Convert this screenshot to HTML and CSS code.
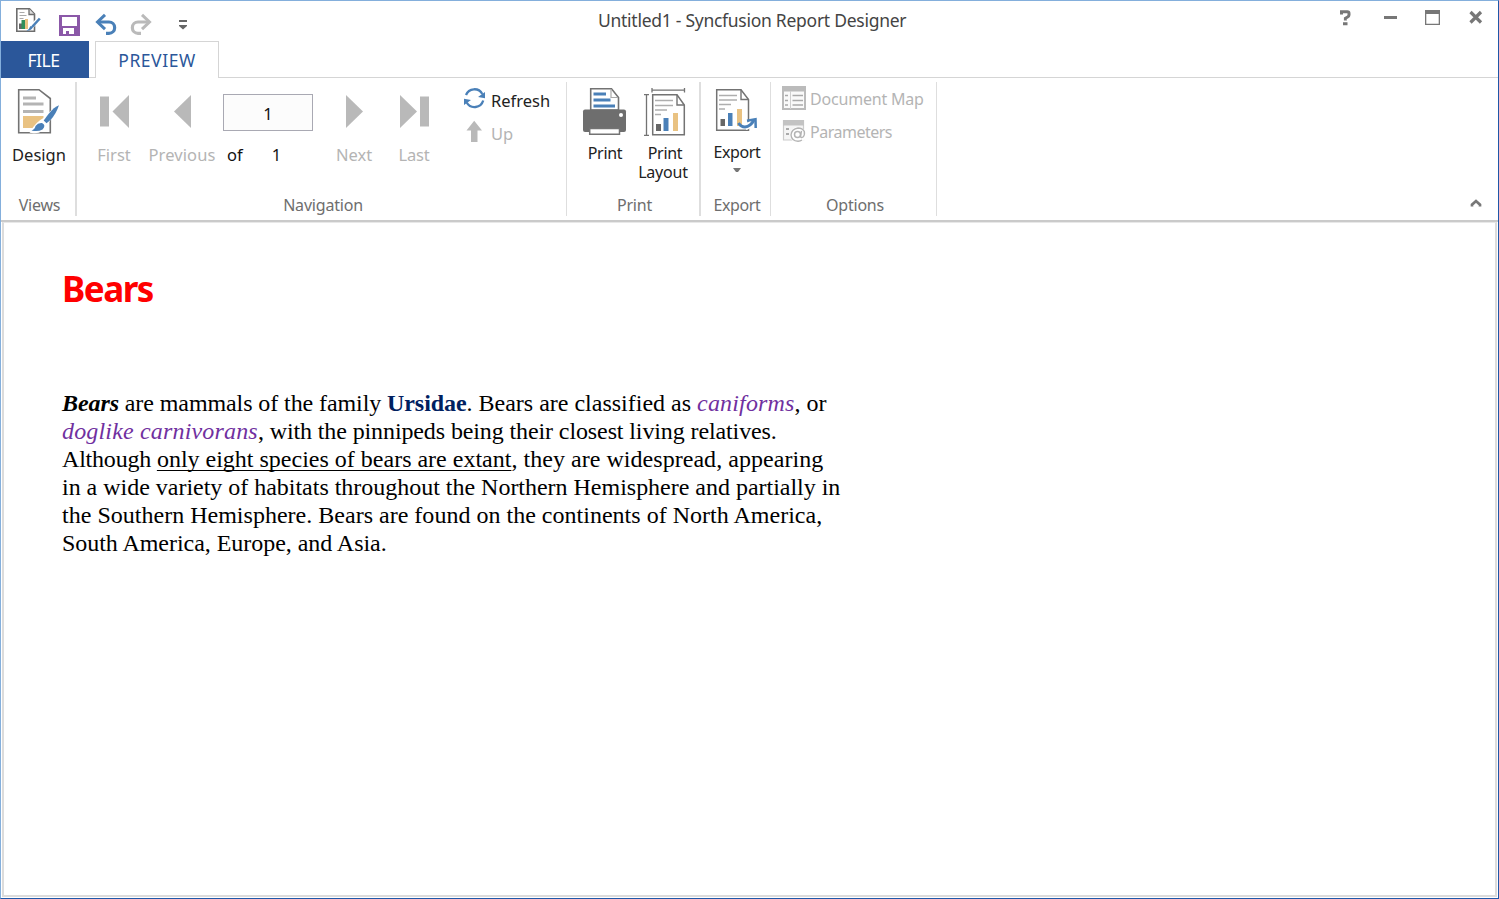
FILE: index.html
```html
<!DOCTYPE html>
<html lang="en">
<head>
<meta charset="utf-8">
<title>Untitled1 - Syncfusion Report Designer</title>
<link rel="stylesheet" href="styles.css">
</head>
<body>
<div class="window">
  <header class="titlebar">
    <div class="quick">
      <svg class="q-app" viewBox="14 6 28 28" width="28" height="28">
        <path d="M16.800 8.800H29.500L34.500 14V31.200H16.800Z" fill="#fff" stroke="#6d6d6d" stroke-width="1.600"/>
        <path d="M29 8.800V14.500H34.500" fill="#ddd" stroke="#6d6d6d" stroke-width="1.300"/>
        <path d="M19.500 12.500h5M19.500 15.500h7M19.500 18.500h4" stroke="#aaa" stroke-width="1.200"/>
        <path d="M19 23.500h3v5.500h-3z" fill="#666"/><path d="M21.500 20h3.500v9h-3.500z" fill="#2f8f5b"/><path d="M25 19h3v10h-3z" fill="#e9c282"/>
        <path d="M37 21L32 26" stroke="#fff" stroke-width="4"/>
        <path d="M39.800 18.500L32.500 26.500" stroke="#4a80b8" stroke-width="2.500"/><path d="M33.500 26q-1.500 5-7 4.800q3-1.500 3.700-4.500z" fill="#4a80b8"/>
      </svg>
      <svg class="q-save" viewBox="59 15 21 21" width="21" height="21">
        <path fill="#8b58a8" fill-rule="evenodd" d="M59 15H80V36H59ZM62 17V26H77V17ZM63 28V34H66V31H69V34H74V28Z"/>
      </svg>
      <svg class="q-undo" viewBox="94 13 24 24" width="24" height="24">
        <path d="M98 22H109A5.500 5.500 0 0 1 109 33.300H106" fill="none" stroke="#4a80b8" stroke-width="3.200"/>
        <path d="M105 14.800L97.500 22L105 29.200" fill="none" stroke="#4a80b8" stroke-width="3"/>
      </svg>
      <svg class="q-redo" viewBox="129 13 24 24" width="24" height="24">
        <path d="M149 22H138A5.500 5.500 0 0 0 138 33.300H141" fill="none" stroke="#bababa" stroke-width="3.200"/>
        <path d="M142 14.800L149.500 22L142 29.200" fill="none" stroke="#bababa" stroke-width="3"/>
      </svg>
      <svg class="q-more" viewBox="178 18 10 12" width="10" height="12">
        <path d="M179 20h8v2h-8zM179 25h8v1l-4 3.500l-4-3.500z" fill="#666"/>
      </svg>
    </div>
    <div class="caption">Untitled1 - Syncfusion Report Designer</div>
    <svg class="controls" viewBox="1336 6 150 24" width="150" height="24">
      <path d="M1341.500 14.500V11.700H1347.300Q1349 11.700 1349 13.500V15Q1349 16.500 1347.500 17L1345.400 18.300V20.500M1343 23.700H1347.500" fill="none" stroke="#777" stroke-width="3"/>
      <path d="M1384 16h13v3h-13z" fill="#777"/>
      <path fill="#777" fill-rule="evenodd" d="M1425 10h15v15h-15zM1426.300 14v9.700h12.400V14z"/>
      <path d="M1470.500 12L1481 22.500M1481 12L1470.500 22.500" stroke="#777" stroke-width="3.200"/>
    </svg>
  </header>

  <nav class="tabs">
    <div class="tab-file"><span class="t-file">FILE</span></div>
    <div class="tab-gap"></div>
    <div class="tab-preview"><span class="t-preview">PREVIEW</span></div>
    <div class="tab-rest"></div>
  </nav>

  <section class="ribbon">
    <div class="group views">
      <div class="body">
        <div class="btn">
          <svg viewBox="14 84 50 58" width="50" height="58">
            <path d="M18.700 89.700H39L50.300 98.500V132.800H18.700Z" fill="#fff" stroke="#737373" stroke-width="1.600"/>
            <path d="M23 98h13M23 104h20.500M23 111.500h20.500" stroke="#b4b4b4" stroke-width="2.800"/>
            <path d="M23 116h20.500v12H23z" fill="#e9c282"/>
            <path d="M58 105.500L44.500 119Q37 123 32 131.500Q42 133 44.500 124.500L48 121Z" fill="#fff" stroke="#fff" stroke-width="3"/>
            <path d="M59 105.200Q54 107 48.500 114L43.700 120.500L46.500 123.200L50.500 120Q56 114 59 105.200Z" fill="#4a80b8"/>
            <path d="M42 123Q46.500 125 42.500 129.500Q38 132 31.500 130.500Q35 129 35.500 126Q38 122.500 42 123Z" fill="#4a80b8"/>
          </svg>
          <span class="dark t-design">Design</span>
        </div>
      </div>
      <div class="label l-views">Views</div>
    </div>

    <div class="group navigation">
      <div class="body">
        <div class="btn b-first">
          <svg viewBox="90 84 48 58" width="48" height="58"><path d="M100 96.500h9v30h-9zM129 95v33L112.500 111.500z" fill="#b9b9b9"/></svg>
          <span class="t-first">First</span>
        </div>
        <div class="btn b-prev">
          <svg viewBox="158 84 48 58" width="48" height="58"><path d="M191 95v33L174 111.500z" fill="#b9b9b9"/></svg>
          <span class="t-prev">Previous</span>
        </div>
        <div class="pager">
          <div class="page-box">1</div>
          <div class="page-count"><span class="t-of">of</span><span>1</span></div>
        </div>
        <div class="btn b-next">
          <svg viewBox="330 84 48 58" width="48" height="58"><path d="M346 95v33L363 111.500z" fill="#b9b9b9"/></svg>
          <span class="t-next">Next</span>
        </div>
        <div class="btn b-last">
          <svg viewBox="390 84 48 58" width="48" height="58"><path d="M400 95v33L417 111.500zM420 96.500h9v30h-9z" fill="#b9b9b9"/></svg>
          <span class="t-last">Last</span>
        </div>
        <div class="side">
          <div class="row">
            <svg viewBox="463 87.500 24 24" width="24" height="24">
              <path d="M466 95.500A9 9 0 0 1 482.300 94.500M483.200 101A9 9 0 0 1 466.700 103" fill="none" stroke="#4a80b8" stroke-width="2.300"/>
              <path d="M485 92.500V98.800L478 97.500ZM464 105.500V99.300L471 100.500Z" fill="#4a80b8"/>
            </svg>
            <span class="dark t-refresh">Refresh</span>
          </div>
          <div class="row r-up">
            <svg viewBox="463 120 24 24" width="24" height="24"><path d="M474.200 120.800L482 130.500H477.500V142H471V130.500H466.500Z" fill="#b9b9b9"/></svg>
            <span class="t-up">Up</span>
          </div>
        </div>
      </div>
      <div class="label l-nav">Navigation</div>
    </div>

    <div class="group print">
      <div class="body">
        <div class="btn b-print">
          <svg viewBox="580 84 50 58" width="50" height="58">
            <path d="M590.700 110V88.700H611.500L618.500 97.500V110Z" fill="#fff" stroke="#737373" stroke-width="1.600"/>
            <path d="M611 89V97.500H618" fill="none" stroke="#aaa" stroke-width="1.200"/>
            <path d="M593.500 94h12.500M593.500 100h17M593.500 106h21.500" stroke="#4a80b8" stroke-width="2.800"/>
            <rect x="583" y="109.500" width="43" height="22.500" rx="2" fill="#6e6e6e"/>
            <circle cx="621" cy="115" r="2" fill="#fff"/>
            <path d="M589.700 128.500H619.500V134.300H589.700Z" fill="#fff" stroke="#737373" stroke-width="1.500"/>
          </svg>
          <span class="dark t-print">Print</span>
        </div>
        <div class="btn b-layout">
          <svg viewBox="640 84 50 58" width="50" height="58">
            <path d="M652 90.200H684.500M652 88v4.500M684.500 88v4.500M646.500 95V135M644 94.700h5M644 135.300h5" stroke="#737373" stroke-width="1.300"/>
            <path d="M652.700 94.700H677L684.300 105V134.800H652.700Z" fill="#fff" stroke="#737373" stroke-width="1.500"/>
            <path d="M677 94.700V105H684.300" fill="none" stroke="#737373" stroke-width="1.400"/>
            <path d="M655 100.500h18M655 105.500h18M655 110h12M655 114.500h6" stroke="#aeaeae" stroke-width="1.400"/>
            <path d="M656 124h5v7h-5z" fill="#666"/><path d="M663.500 118h5v13h-5z" fill="#4a80b8"/><path d="M673 113h5v18h-5z" fill="#e9c282"/>
          </svg>
          <span class="dark t-print">Print</span>
          <span class="dark t-layout">Layout</span>
        </div>
      </div>
      <div class="label l-print">Print</div>
    </div>

    <div class="group export">
      <div class="body">
        <div class="btn b-export">
          <svg viewBox="712 84 50 58" width="50" height="58">
            <path d="M716.700 89.700H741L748.500 99.500V130.300H716.700Z" fill="#fff" stroke="#737373" stroke-width="1.500"/>
            <path d="M741 89.700V99.500H748.500" fill="none" stroke="#737373" stroke-width="1.400"/>
            <path d="M719 95.500h18M719 100h18M719 104.500h12M719 109h6" stroke="#aeaeae" stroke-width="1.400"/>
            <path d="M720.500 119h4.500v7h-4.500z" fill="#666"/><path d="M728 113h4.500v13H728z" fill="#4a80b8"/><path d="M737 109h5v17h-5z" fill="#e9c282"/>
            <path d="M745.500 127Q750 126 753 121" fill="none" stroke="#fff" stroke-width="6"/>
            <path d="M738.500 123Q741 127 745 127Q750.500 126.500 754 120" fill="none" stroke="#4a80b8" stroke-width="3"/>
            <path d="M747 120.800L755.500 119.300L755.700 128" fill="none" stroke="#4a80b8" stroke-width="2.500"/>
          </svg>
          <span class="dark t-export">Export</span>
          <svg class="caret" viewBox="732 168 10 5" width="10" height="5"><path d="M733 168h8l-3 4h-2z" fill="#777"/></svg>
        </div>
      </div>
      <div class="label l-export">Export</div>
    </div>

    <div class="group options">
      <div class="body">
        <div class="side">
          <div class="row">
            <svg viewBox="782 86 24 24" width="24" height="24">
              <path d="M783 87H805V109H783Z" fill="#fafafa" stroke="#bbb" stroke-width="2"/>
              <path d="M783 87h22v4.500h-22z" fill="#bbb"/>
              <path d="M790.500 91v18" stroke="#d0d0d0" stroke-width="1"/>
              <path d="M785 95.500h3M785 100.500h3M785 105h3M792.500 95.500h10.500M792.500 100.500h10.500M792.500 105h10.500" stroke="#aaa" stroke-width="1.600"/>
            </svg>
            <span class="t-map">Document Map</span>
          </div>
          <div class="row r-param">
            <svg viewBox="782 119 24 24" width="24" height="24">
              <path d="M783.500 120.500H803.500V140H783.500Z" fill="#f5f5f5" stroke="#ccc" stroke-width="1.200"/>
              <path d="M783 120h21v5.500h-21z" fill="#c3c3c3"/>
              <path d="M786 129h3M786 134h3" stroke="#aaa" stroke-width="2"/>
              <circle cx="798" cy="135" r="8" fill="#fff"/>
              <circle cx="797.500" cy="134.500" r="3" fill="none" stroke="#b4b4b4" stroke-width="1.500"/>
              <path d="M801.500 130.800L800.500 136.500Q801 138.300 803 137Q805 135 804.300 131.500Q802.500 128 798 128Q791.500 129 791 135Q791.500 141 798 141.200Q800.500 141 802 140" fill="none" stroke="#b4b4b4" stroke-width="1.400"/>
            </svg>
            <span class="t-param">Parameters</span>
          </div>
        </div>
      </div>
      <div class="label l-options">Options</div>
    </div>

    <svg class="collapse" viewBox="1469 197 14 12" width="14" height="12"><path d="M1472 206.500V204.700L1476 201L1480 204.700V206.500" fill="none" stroke="#777" stroke-width="2.700"/></svg>
  </section>

  <main class="page">
    <h1>Bears</h1>
    <p>
      <span class="ln"><span class="lead"><b><i>Bears</i></b> are mammals of the family </span><b class="navy">Ursidae</b>. Bears are classified as <i class="violet">caniforms</i>, or</span>
      <span class="ln"><i class="violet">doglike carnivorans</i><span class="tight">, with the pinnipeds being their closest living relatives.</span></span>
      <span class="ln"><span class="tighter">Although </span><u>only eight species of bears are extant</u><span class="loose">, they are widespread, appearing</span></span>
      <span class="ln ln4">in a wide variety of habitats throughout the Northern Hemisphere and partially in</span>
      <span class="ln ln5">the Southern Hemisphere. Bears are found on the continents of North America,</span>
      <span class="ln ln6">South America, Europe, and Asia.</span>
    </p>
  </main>
</div>
</body>
</html>
```

FILE: styles.css
```css
* { box-sizing: border-box; }
body { margin: 0; background: #fff; font-family: "Noto Sans", "Open Sans", sans-serif; font-size: 16.500px; color: #b4b4b4; white-space: nowrap; }
svg { display: block; flex: none; }

.window { width: 1499px; height: 899px; display: flex; flex-direction: column; border: 1px solid #84afdc; border-right: 1px solid #1f57a8; border-bottom: 1px solid #1f57a8; overflow: hidden; }

.titlebar { height: 40px; display: grid; grid-template-columns: 597px 1fr 162px; }
.quick { display: flex; align-items: flex-start; padding-left: 13px; }
.q-app { margin-top: 5px; }
.q-save { margin: 14px 0 0 17px; }
.q-undo { margin: 12px 0 0 14px; }
.q-redo { margin: 12px 0 0 11px; }
.q-more { margin: 17px 0 0 25px; }
.caption { color: #444; font-size: 17.500px; line-height: 38px; letter-spacing: -0.27px; }
.controls { margin-top: 5px; }

.tabs { height: 37px; display: flex; font-size: 17.500px; line-height: 39px; }
.tab-file { width: 88px; height: 37px; background: #2b579a; color: #fff; text-align: center; padding-right: 3px; }
.t-file { letter-spacing: -0.5px; }
.tab-gap { width: 6px; border-bottom: 1px solid #d5d5d5; }
.tab-preview { width: 124px; color: #2b579a; text-align: center; border: 1px solid #d5d5d5; border-bottom: 0; line-height: 37px; }
.t-preview { letter-spacing: 0.550px; }
.tab-rest { flex: 1; border-bottom: 1px solid #d5d5d5; }

.ribbon { height: 144px; display: flex; padding-top: 4px; border-bottom: 2px solid #cacaca; }
.group { height: 134px; display: flex; flex-direction: column; border-right: 1px solid #dedede; }
.body { height: 112px; display: flex; align-items: flex-start; }
.label { line-height: 22px; text-align: center; color: #6e6e6e; font-size: 16px; letter-spacing: -0.2px; padding-left: 3px; }
.views { width: 76px; border-right-width: 2px; }
.views .body { padding-left: 13px; }
.navigation { width: 490px; }
.print { width: 134px; border-right-width: 2px; }
.export { width: 70px; }
.l-export { letter-spacing: -0.4px; }
.options { width: 166px; }

.btn { width: 50px; display: flex; flex-direction: column; align-items: center; padding-top: 2px; line-height: 22px; }
.btn > span { position: relative; top: 2px; }
.dark { color: #222; }
.b-first { width: 48px; margin-left: 13px; }
.b-prev { width: 48px; margin-left: 20px; }
.t-prev { letter-spacing: 0.120px; }
.b-next { width: 48px; margin-left: 17px; }
.b-last { width: 48px; margin-left: 12px; }
.t-last { letter-spacing: -0.2px; }
.pager { width: 90px; margin: 12px 0 0 17px; color: #111; }
.page-box { height: 37px; border: 1px solid #a9a9b3; background: #fcfcfc; text-align: center; line-height: 38px; }
.page-count { display: flex; gap: 29px; padding-left: 4px; margin-top: 13px; line-height: 22px; }
.side { display: flex; flex-direction: column; padding-top: 5px; margin-left: 25px; }
.row { height: 24px; display: flex; gap: 4px; line-height: 27px; }
.r-up, .r-param { margin-top: 9px; }
.btn.b-print, .btn.b-layout, .btn.b-export { line-height: 19px; font-size: 16px; }
.btn.b-print > span, .btn.b-layout > span { top: 2px; }
.btn.b-export > span { top: 1px; }
.btn .t-print { letter-spacing: -0.3px; }
.b-print { margin-left: 13px; }
.b-layout { margin-left: 10px; }
.t-layout { margin-left: -4px; letter-spacing: -0.2px; }
.b-export { margin-left: 11px; }
.t-export { letter-spacing: -0.4px; }
.caret { margin-top: 7px; }
.options .side { margin-left: 11px; padding-top: 4px; }
.options .row { line-height: 26px; gap: 4px; font-size: 16px; }
.t-map { letter-spacing: -0.2px; }
.t-param { letter-spacing: -0.5px; }
.collapse { margin: 115px 15px 0 auto; }

.page { flex: 1; border: 2px solid #dcdcdc; border-top: 1px solid #e8e8e8; margin: 0 1px 1px 1px; padding: 38px 0 0 58px; color: #000; }
h1 { margin: 0; font-size: 35px; line-height: 55px; font-weight: 700; letter-spacing: -1.500px; color: #f00; }
p { margin: 73px 0 0; font-family: "Liberation Serif", "Times New Roman", serif; font-size: 24px; line-height: 28px; }
.ln { display: block; }
.lead { letter-spacing: -0.090px; }
.tight { letter-spacing: -0.110px; }
.tighter { letter-spacing: -0.2px; }
.loose { letter-spacing: 0.040px; }
.ln4 { letter-spacing: -0.018px; }
.ln5 { letter-spacing: 0.014px; }
.ln6 { letter-spacing: -0.040px; }
.navy { color: #002060; letter-spacing: -0.080px; }
.violet { color: #7030a0; letter-spacing: 0.170px; }
u { text-decoration-thickness: 1px; text-underline-offset: 3px; text-decoration-skip-ink: none; }
```
